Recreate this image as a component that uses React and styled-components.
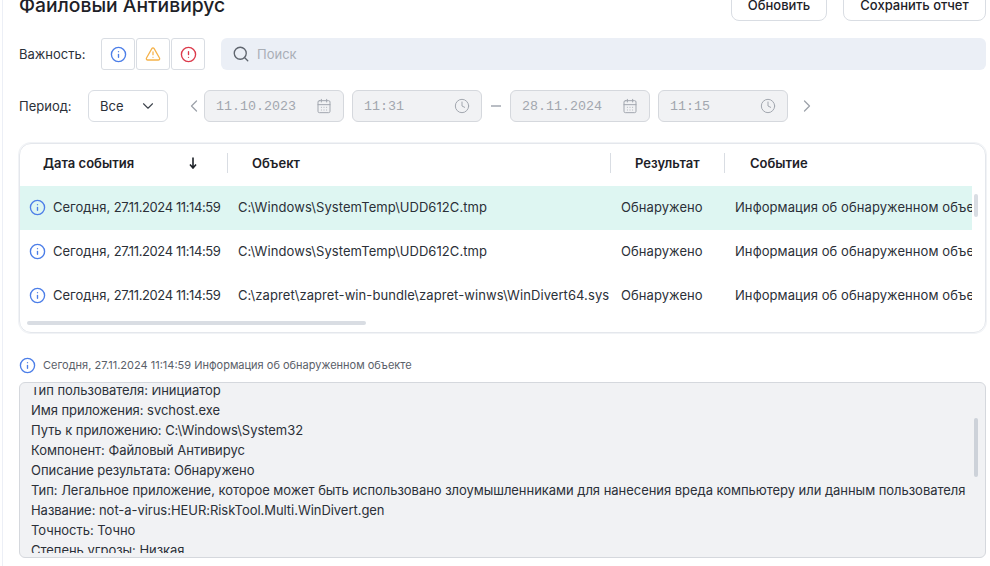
import React from 'react';
import styled, { createGlobalStyle } from 'styled-components';
import { Info, TriangleAlert, CircleAlert, Search, CalendarDays, Clock, ChevronDown, ChevronLeft, ChevronRight } from 'lucide-react';

const Global = createGlobalStyle`
  html, body { margin: 0; padding: 0; background: #fff; height: 100%; overflow: hidden; }
  body { font-family: Inter, "Noto Sans", sans-serif; color: #1d2127; }
`;

const Page = styled.div`
  height: 566px;
  box-sizing: border-box;
  margin-left: 2px;
  border-left: 1px solid #eceff6;
  padding: 0 4px 0 16px;
  overflow: hidden;
`;

const Header = styled.div`
  display: flex;
  align-items: center;
  justify-content: space-between;
  height: 42px;
  margin-top: -16px;
`;

const Title = styled.h1`
  margin: 0;
  font-size: 19.3px;
  font-weight: 500;
  color: #1d2127;
`;

const Actions = styled.div`
  display: flex;
  gap: 16px;
`;

const ActionButton = styled.button`
  width: ${p => p.$w}px;
  height: 32px;
  padding: 0;
  background: #fff;
  border: 1px solid #d9dde3;
  border-radius: 8px;
  font: 500 13px Inter, sans-serif;
  color: #1d2127;
`;

const FilterRow = styled.div`
  display: flex;
  align-items: center;
  height: 32px;
  margin-top: 12px;
`;

const Label = styled.span`
  font-size: 13px;
  color: #2b3038;
  width: ${p => p.$w}px;
  flex: none;
`;

const Severity = styled.div`
  display: flex;
  gap: 1px;
  margin-right: 16px;
`;

const SeverityButton = styled.div`
  width: 34px;
  height: 32px;
  box-sizing: border-box;
  display: flex;
  align-items: center;
  justify-content: center;
  border: 1px solid #d9dde3;
  border-radius: 3px;
  color: ${p => p.$c};
`;

const SearchBox = styled.div`
  flex: 1;
  height: 32px;
  display: flex;
  align-items: center;
  gap: 7px;
  padding-left: 11px;
  background: #ebeff6;
  border-radius: 6px;
  color: #a9aeb6;
  font-size: 13px;
  svg { color: #5f656e; }
`;

const PeriodRow = styled(FilterRow)`
  margin-top: 20px;
`;

const Select = styled.div`
  width: 80px;
  height: 32px;
  box-sizing: border-box;
  display: flex;
  align-items: center;
  justify-content: space-between;
  padding: 0 10px 0 11px;
  border: 1px solid #d9dde3;
  border-radius: 6px;
  font-size: 13px;
  color: #2b3038;
  margin-right: 16px;
  svg { color: #3f454e; }
`;

const Arrow = styled.div`
  width: 20px;
  display: flex;
  color: #9da2aa;
`;

const Field = styled.div`
  width: ${p => p.$w}px;
  height: 32px;
  box-sizing: border-box;
  display: flex;
  align-items: center;
  justify-content: space-between;
  padding: 0 11px;
  margin-right: ${p => p.$mr || 0}px;
  background: #f1f2f4;
  border: 1px solid #d5d8dd;
  border-radius: 6px;
  font-family: "Liberation Mono", monospace;
  font-size: 13.33px;
  color: #a2a7af;
  svg { color: #a2a7af; }
`;

const Dash = styled.div`
  width: 10px;
  height: 2px;
  background: #b9bdc4;
  margin: 0 9px;
`;

const TableCard = styled.div`
  position: relative;
  height: 190px;
  box-sizing: border-box;
  margin-top: 21px;
  padding-right: 13px;
  border: 1px solid #e4e7ec;
  border-radius: 12px;
  box-shadow: 0 0 0 1px #f1f3f6;
  overflow: hidden;
`;

const TableHead = styled.div`
  display: grid;
  grid-template-columns: 208px 383px 114px 1fr;
  height: 42px;
  box-sizing: border-box;
  padding-bottom: 4px;
  align-items: center;
  font-size: 13px;
  font-weight: 600;
  color: #1d2127;
`;

const HeadCell = styled.div`
  display: flex;
  align-items: center;
  justify-content: space-between;
  height: 20px;
  padding: 0 ${p => p.$pr || 0}px 0 ${p => p.$pl}px;
  border-right: ${p => (p.$last ? 'none' : '1px solid #d9dde3')};
`;

const Row = styled.div`
  display: grid;
  grid-template-columns: 208px 383px 114px 1fr;
  height: 44px;
  box-sizing: border-box;
  padding-bottom: 2px;
  align-items: center;
  font-size: 13px;
  color: #2b3038;
  background: ${p => (p.$active ? '#def6f2' : 'transparent')};
`;

const Cell = styled.div`
  display: flex;
  align-items: center;
  gap: 7px;
  padding-left: ${p => p.$pl}px;
  white-space: nowrap;
  overflow: hidden;
  letter-spacing: 0.08px;
  svg { flex: none; color: #4c7ee8; }
`;

const DateText = styled.span`
  letter-spacing: 0;
  b { font-weight: 400; letter-spacing: -0.4px; }
`;

const HScroll = styled.div`
  position: absolute;
  left: 7px;
  bottom: 7px;
  width: 339px;
  height: 4px;
  border-radius: 2px;
  background: #d9dde3;
`;

const VScroll = styled.div`
  position: absolute;
  right: ${p => p.$r}px;
  top: ${p => p.$t}px;
  width: 4px;
  height: ${p => p.$h}px;
  border-radius: 2px;
  background: ${p => p.$c};
`;

const DetailTitle = styled.div`
  display: flex;
  align-items: center;
  gap: 7px;
  height: 16px;
  margin-top: 24px;
  font-size: 11px;
  color: #5a6069;
  svg { color: #4c7ee8; }
`;

const DetailBox = styled.div`
  position: relative;
  height: 176px;
  box-sizing: border-box;
  margin-top: 9px;
  padding: 4px 11px;
  background: #f1f2f4;
  border: 1px solid #d5d8dd;
  border-radius: 6px;
`;

const DetailInner = styled.div`
  height: 166px;
  overflow: hidden;
`;

const DetailLines = styled.div`
  margin-top: -7px;
  font-size: 13px;
  line-height: 20px;
  letter-spacing: -0.04px;
  color: #2b3038;
  white-space: nowrap;
`;

const SortArrow = () => (
  <svg width="8" height="12" viewBox="0 0 8 12" fill="none" stroke="currentColor" strokeWidth="1.6">
    <path d="M4 0.5V10.5M1 7.5L4 11L7 7.5" />
  </svg>
);

const rows = [
  { path: 'C:\\Windows\\SystemTemp\\UDD612C.tmp', active: true },
  { path: 'C:\\Windows\\SystemTemp\\UDD612C.tmp' },
  { path: 'C:\\zapret\\zapret-win-bundle\\zapret-winws\\WinDivert64.sys' },
];

const lines = [
  'Тип пользователя: Инициатор',
  'Имя приложения: svchost.exe',
  'Путь к приложению: C:\\Windows\\System32',
  'Компонент: Файловый Антивирус',
  'Описание результата: Обнаружено',
  'Тип: Легальное приложение, которое может быть использовано злоумышленниками для нанесения вреда компьютеру или данным пользователя',
  'Название: not-a-virus:HEUR:RiskTool.Multi.WinDivert.gen',
  'Точность: Точно',
  'Степень угрозы: Низкая',
];

export default function App() {
  return (
    <>
      <Global />
      <Page>
        <Header>
          <Title>Файловый Антивирус</Title>
          <Actions>
            <ActionButton $w={96}>Обновить</ActionButton>
            <ActionButton $w={143}>Сохранить отчет</ActionButton>
          </Actions>
        </Header>

        <FilterRow>
          <Label $w={82}>Важность:</Label>
          <Severity>
            <SeverityButton $c="#4c7ee8"><Info size={17} strokeWidth={1.9} /></SeverityButton>
            <SeverityButton $c="#f5b24a"><TriangleAlert size={16} strokeWidth={1.9} /></SeverityButton>
            <SeverityButton $c="#dc3a4b"><CircleAlert size={17} strokeWidth={1.9} /></SeverityButton>
          </Severity>
          <SearchBox><Search size={18} strokeWidth={1.8} />Поиск</SearchBox>
        </FilterRow>

        <PeriodRow>
          <Label $w={69}>Период:</Label>
          <Select>Все<ChevronDown size={18} strokeWidth={1.5} /></Select>
          <Arrow><ChevronLeft size={20} strokeWidth={1.5} /></Arrow>
          <Field $w={140} $mr={8}>11.10.2023<CalendarDays size={16} strokeWidth={1.5} /></Field>
          <Field $w={130}>11:31<Clock size={16} strokeWidth={1.5} /></Field>
          <Dash />
          <Field $w={140} $mr={8}>28.11.2024<CalendarDays size={16} strokeWidth={1.5} /></Field>
          <Field $w={130} $mr={9}>11:15<Clock size={16} strokeWidth={1.5} /></Field>
          <Arrow><ChevronRight size={20} strokeWidth={1.5} /></Arrow>
        </PeriodRow>

        <TableCard>
          <TableHead>
            <HeadCell $pl={23} $pr={30}>Дата события<SortArrow /></HeadCell>
            <HeadCell $pl={24}>Объект</HeadCell>
            <HeadCell $pl={24}>Результат</HeadCell>
            <HeadCell $pl={25} $last>Событие</HeadCell>
          </TableHead>
          {rows.map((r, i) => (
            <Row key={i} $active={r.active}>
              <Cell $pl={9}>
                <Info size={17} strokeWidth={1.9} />
                <DateText>Сегодня, <b>27.11.2024 11:14:59</b></DateText>
              </Cell>
              <Cell $pl={10}>{r.path}</Cell>
              <Cell $pl={10}>Обнаружено</Cell>
              <Cell $pl={10}>Информация об обнаруженном объекте</Cell>
            </Row>
          ))}
          <VScroll $r={7} $t={50} $h={23} $c="#d9dde3" />
          <HScroll />
        </TableCard>

        <DetailTitle>
          <Info size={17} strokeWidth={1.9} />
          Сегодня, 27.11.2024 11:14:59 Информация об обнаруженном объекте
        </DetailTitle>
        <DetailBox>
          <DetailInner>
            <DetailLines>
              {lines.map(l => <div key={l}>{l}</div>)}
            </DetailLines>
          </DetailInner>
          <VScroll $r={7} $t={35} $h={59} $c="#cdd2d9" />
        </DetailBox>
      </Page>
    </>
  );
}
